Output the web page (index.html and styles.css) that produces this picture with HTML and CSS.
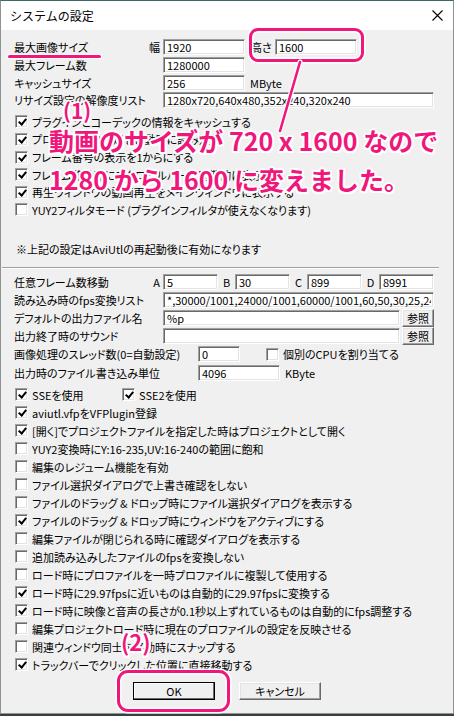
FILE: index.html
```html
<!DOCTYPE html>
<html lang="ja">
<head>
    <meta charset="UTF-8">
    <meta name="viewport" content="width=device-width, initial-scale=1.0">
    <title>システムの設定</title>
    <link rel="stylesheet" href="styles.css">
</head>
<body>
    <div class="window">
        <div class="titlebar">
            <span class="title">システムの設定</span>
            <svg class="close" width="11" height="11" viewBox="0 0 11 11">
                <path d="M0.5 0.5L10.5 10.5M10.5 0.5L0.5 10.5" stroke="#000" stroke-width="1.1" fill="none"/>
            </svg>
        </div>

        <div class="client">
            <!-- 上段：再起動後に有効になる設定 -->
            <div class="upper">
                <div class="row">
                    <span class="label">最大画像サイズ<span>幅</span></span>
                    <input class="edit size" value="1920">
                    <span class="after-h">高さ</span>
                    <input class="edit size" value="1600">
                </div>
                <div class="row">
                    <span class="label">最大フレーム数</span>
                    <input class="edit size" value="1280000">
                </div>
                <div class="row">
                    <span class="label">キャッシュサイズ</span>
                    <input class="edit size" value="256">
                    <span class="unit">MByte</span>
                </div>
                <div class="row">
                    <span class="label">リサイズ設定の解像度リスト</span>
                    <input class="edit full" value="1280x720,640x480,352x240,320x240">
                </div>

                <div class="checks first">
                    <label class="check"><span class="box on"></span>プラグインとコーデックの情報をキャッシュする</label>
                    <label class="check"><span class="box on"></span>プロファイルの設定を起動時に読み込む</label>
                    <label class="check"><span class="box on"></span>フレーム番号の表示を1からにする</label>
                    <label class="check"><span class="box on"></span>フレーム移動時にスクロールバーを同期的に表示する</label>
                    <label class="check"><span class="box on"></span>再生ウィンドウの動画再生をメインウィンドウに表示する</label>
                    <label class="check"><span class="box"></span>YUY2フィルタモード (プラグインフィルタが使えなくなります)</label>
                </div>

                <div class="note">※上記の設定はAviUtlの再起動後に有効になります</div>
            </div>

            <div class="sep"></div>

            <!-- 下段 -->
            <div class="lower">
                <div class="row">
                    <span class="label">任意フレーム数移動<span>A</span></span>
                    <input class="edit abcd" value="5">
                    <span class="key">B</span>
                    <input class="edit abcd" value="30">
                    <span class="key">C</span>
                    <input class="edit abcd" value="899">
                    <span class="key">D</span>
                    <input class="edit abcd" value="8991">
                </div>
                <div class="row">
                    <span class="label">読み込み時のfps変換リスト</span>
                    <input class="edit full" value="*,30000/1001,24000/1001,60000/1001,60,50,30,25,24,15,12">
                </div>
                <div class="row">
                    <span class="label">デフォルトの出力ファイル名</span>
                    <input class="edit path" value="%p">
                    <button class="ref">参照</button>
                </div>
                <div class="row">
                    <span class="label">出力終了時のサウンド</span>
                    <input class="edit path" value="">
                    <button class="ref">参照</button>
                </div>
                <div class="row">
                    <span class="label wide">画像処理のスレッド数(0=自動設定)</span>
                    <input class="edit thread" value="0">
                    <label class="check cpu"><span class="box"></span>個別のCPUを割り当てる</label>
                </div>
                <div class="row">
                    <span class="label wide">出力時のファイル書き込み単位</span>
                    <input class="edit size" value="4096">
                    <span class="unit">KByte</span>
                </div>

                <div class="sse">
                    <label class="check sse1"><span class="box on"></span>SSEを使用</label>
                    <label class="check"><span class="box on"></span>SSE2を使用</label>
                </div>

                <div class="checks">
                    <label class="check"><span class="box on"></span>aviutl.vfpをVFPlugin登録</label>
                    <label class="check"><span class="box on"></span>[開く]でプロジェクトファイルを指定した時はプロジェクトとして開く</label>
                    <label class="check"><span class="box"></span>YUY2変換時にY:16-235,UV:16-240の範囲に飽和</label>
                    <label class="check"><span class="box"></span>編集のレジューム機能を有効</label>
                    <label class="check"><span class="box"></span>ファイル選択ダイアログで上書き確認をしない</label>
                    <label class="check"><span class="box"></span>ファイルのドラッグ &amp; ドロップ時にファイル選択ダイアログを表示する</label>
                    <label class="check"><span class="box on"></span>ファイルのドラッグ &amp; ドロップ時にウィンドウをアクティブにする</label>
                    <label class="check"><span class="box"></span>編集ファイルが閉じられる時に確認ダイアログを表示する</label>
                    <label class="check"><span class="box"></span>追加読み込みしたファイルのfpsを変換しない</label>
                    <label class="check"><span class="box"></span>ロード時にプロファイルを一時プロファイルに複製して使用する</label>
                    <label class="check"><span class="box on"></span>ロード時に29.97fpsに近いものは自動的に29.97fpsに変換する</label>
                    <label class="check"><span class="box on"></span>ロード時に映像と音声の長さが0.1秒以上ずれているものは自動的にfps調整する</label>
                    <label class="check"><span class="box"></span>編集プロジェクトロード時に現在のプロファイルの設定を反映させる</label>
                    <label class="check"><span class="box"></span>関連ウィンドウ同士を移動時にスナップする</label>
                    <label class="check"><span class="box on"></span>トラックバーでクリックした位置に直接移動する</label>
                </div>
            </div>

            <div class="buttons">
                <button class="btn default">OK</button>
                <button class="btn">キャンセル</button>
            </div>
        </div>
    </div>

    <!-- 説明用の書き込み -->
    <div class="mark-underline"></div>
    <div class="mark-box height-box"></div>
    <div class="mark-box ok-box"></div>
    <svg class="mark-line" width="454" height="716" viewBox="0 0 454 716">
        <line x1="300" y1="62" x2="280" y2="131" stroke="#fff" stroke-width="5" stroke-linecap="round"/>
        <line x1="300" y1="62" x2="280" y2="131" stroke="#f0177c" stroke-width="2.6" stroke-linecap="round"/>
    </svg>
    <div class="mark-text num1">(1)</div>
    <div class="mark-text num2">(2)</div>
    <div class="mark-text big">動画のサイズが 720 x 1600 なので<br>1280 から 1600 に変えました。</div>
</body>
</html>
```

FILE: styles.css
```css
body {
    margin: 0;
    padding: 0;
    background: #39403f;
    font-family: "Noto Sans CJK JP", sans-serif;
}

.window {
    width: 454px;
    height: 714px;
    box-sizing: border-box;
    background: #f0f0f0;
    border: 1px solid #8c9494;
    border-top-color: #3d6868;
    overflow: hidden;
}

.titlebar {
    height: 29px;
    background: #fff;
    display: flex;
    align-items: center;
    justify-content: space-between;
    padding: 0 10px 0 9px;
}

.title {
    font-size: 12px;
    line-height: 1;
    color: #000;
}

.client {
    padding: 8.7px 0 0 13px;
    font-size: 11px;
    color: #000;
    font-feature-settings: "palt";
}

.row {
    display: flex;
    align-items: center;
    height: 17.6px;
    white-space: nowrap;
}

.lower .row {
    height: 18.2px;
}

.label {
    flex: 0 0 149px;
    box-sizing: border-box;
    display: flex;
    justify-content: space-between;
    padding-right: 3px;
    line-height: 16px;
}

.label.wide {
    flex-basis: 184px;
}

.edit {
    height: 16px;
    box-sizing: border-box;
    margin: 0;
    padding: 0 2px 0 3px;
    font: inherit;
    font-size: 11px;
    line-height: 14px;
    color: #000;
    background: #fff;
    border: 1px solid;
    border-color: #a0a0a0 #fff #fff #a0a0a0;
    box-shadow: inset 1px 1px 0 #696969, inset -1px -1px 0 #e3e3e3;
    outline: none;
}

.edit.size { width: 82px; }
.edit.full { width: 271px; }
.edit.abcd { width: 55px; }
.edit.path { width: 237px; }
.edit.thread { width: 42px; }

.after-h {
    margin: 0 1px 0 6px;
    width: 23px;
}

.unit {
    margin-left: 5px;
}

.key {
    width: 17px;
    text-align: center;
}

.ref {
    margin-left: 2px;
    width: 32px;
    height: 18px;
}

button {
    padding: 0;
    font: inherit;
    font-size: 11px;
    color: #000;
    background: #f0f0f0;
    border: 1px solid;
    border-color: #fff #696969 #696969 #fff;
    box-shadow: inset -1px -1px 0 #a0a0a0, inset 1px 1px 0 #e3e3e3;
}

.checks.first {
    margin-top: 4px;
}

.check {
    display: flex;
    align-items: center;
    height: 17.6px;
    white-space: nowrap;
}

.lower .check {
    height: 18px;
}

.box {
    position: relative;
    flex: 0 0 auto;
    width: 13px;
    height: 13px;
    box-sizing: border-box;
    margin: 0 4px 0 1px;
    background: #fff;
    border: 1px solid;
    border-color: #a0a0a0 #fff #fff #a0a0a0;
    box-shadow: inset 1px 1px 0 #696969, inset -1px -1px 0 #e3e3e3;
}

.box.on::after {
    content: "";
    position: absolute;
    left: 3.5px;
    top: 1px;
    width: 3px;
    height: 6px;
    border: solid #000;
    border-width: 0 2px 2px 0;
    transform: rotate(40deg);
}

.check.cpu {
    margin-left: 25px;
}

.note {
    margin-top: 22.4px;
    height: 17.6px;
    line-height: 17.6px;
    padding-left: 2px;
}

.sep {
    margin: 8px 0 0 -12px;
    width: 437px;
    border-top: 1px solid #a0a0a0;
    border-bottom: 1px solid #fff;
}

.lower {
    margin-top: 4px;
}

.sse {
    display: flex;
    margin-top: 3.8px;
}

.check.sse1 {
    width: 107px;
}

.buttons {
    display: flex;
    gap: 24px;
    margin-top: 8px;
    padding-left: 119px;
}

.btn {
    width: 82px;
    height: 18px;
}

.btn.default {
    border: 1px solid #000;
    box-shadow: inset -1px -1px 0 #696969, inset 1px 1px 0 #fff;
}

/* 説明用の書き込み */
.mark-underline {
    position: absolute;
    left: 8px;
    top: 55px;
    width: 93px;
    height: 2.5px;
    background: #f0177c;
    border-radius: 2px;
    box-shadow: 0 0 0 1px #fff;
}

.mark-box {
    position: absolute;
    box-sizing: border-box;
    border: 3px solid #f0177c;
    border-radius: 9px;
    box-shadow: 0 0 0 1.5px #fff, inset 0 0 0 1.5px #fff;
}

.height-box {
    left: 249px;
    top: 28px;
    width: 115px;
    height: 34px;
}

.ok-box {
    left: 117px;
    top: 670px;
    width: 113px;
    height: 42px;
    border-width: 3.5px;
    border-radius: 11px;
}

.mark-line {
    position: absolute;
    left: 0;
    top: 0;
    pointer-events: none;
}

.mark-text {
    position: absolute;
    color: #f0177c;
    font-weight: bold;
    white-space: nowrap;
    font-family: "Noto Sans CJK JP", sans-serif;
    text-shadow: 2px 0 #fff, -2px 0 #fff, 0 2px #fff, 0 -2px #fff,
        1.5px 1.5px #fff, -1.5px 1.5px #fff, 1.5px -1.5px #fff, -1.5px -1.5px #fff,
        0 0 3px #fff;
}

.num1 {
    left: 63px;
    top: 95px;
    font-size: 21px;
    line-height: 30px;
}

.num2 {
    left: 121px;
    top: 626px;
    font-size: 22px;
    line-height: 30px;
}

.big {
    left: 49px;
    top: 121px;
    font-size: 25px;
    line-height: 39px;
}
```
